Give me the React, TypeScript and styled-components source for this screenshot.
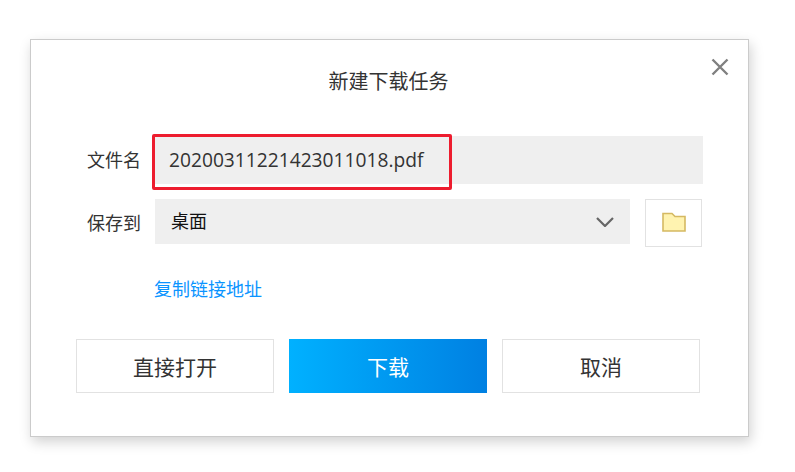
import React from "react";
import styled, { createGlobalStyle } from "styled-components";

const Global = createGlobalStyle`
  html, body { margin: 0; padding: 0; background: #fff; }
  body { font-family: "Open Sans", "Noto Sans CJK SC", sans-serif; color: #333; }
`;

const Stage = styled.div`
  width: 795px;
  height: 472px;
  padding: 39px 0 0 30px;
  box-sizing: border-box;
  overflow: hidden;
`;

const Dialog = styled.div`
  position: relative;
  width: 719px;
  height: 398px;
  box-sizing: border-box;
  background: #fff;
  border: 1px solid #cbcbcb;
  box-shadow: 2px 5px 12px rgba(0, 0, 0, 0.18);
  display: flex;
  flex-direction: column;
`;

const Title = styled.h1`
  margin: 28px 0 0;
  padding-right: 2px;
  height: 28px;
  font-size: 20px;
  line-height: 28px;
  font-weight: 400;
  text-align: center;
  color: #333;
`;

const Close = styled.button`
  position: absolute;
  top: 17px;
  right: 18px;
  width: 20px;
  height: 20px;
  padding: 0;
  border: 0;
  background: none;
  display: block;
`;

const Form = styled.div`
  margin-top: 40px;
  display: flex;
  flex-direction: column;
`;

const Row = styled.div<{ $h: number; $top?: number }>`
  display: flex;
  align-items: flex-start;
  height: ${(p) => p.$h}px;
  margin-top: ${(p) => p.$top ?? 0}px;
  padding-left: 56px;
`;

const Label = styled.label<{ $h: number }>`
  width: 68px;
  height: ${(p) => p.$h}px;
  line-height: ${(p) => p.$h}px;
  font-size: 18px;
  color: #333;
  white-space: nowrap;
`;

const NameField = styled.div`
  position: relative;
  width: 548px;
  height: 48px;
  background: #efefef;
  padding-left: 14px;
  box-sizing: border-box;
  font-size: 19.2px;
  line-height: 48px;
  color: #333;
`;

const Highlight = styled.div`
  position: absolute;
  left: -3px;
  top: -2px;
  width: 300px;
  height: 56px;
  box-sizing: border-box;
  border: 3px solid #ed1c2e;
  border-radius: 2px;
`;

const Select = styled.div`
  width: 475px;
  height: 45px;
  background: #efefef;
  padding: 0 16px;
  box-sizing: border-box;
  display: flex;
  align-items: center;
  justify-content: space-between;
  font-size: 18px;
  line-height: 45px;
  color: #111;
`;

const FolderButton = styled.button`
  width: 57px;
  height: 48px;
  margin-left: 15px;
  padding: 0 0 2px;
  background: #fff;
  border: 1px solid #e2e2e2;
  display: flex;
  align-items: center;
  justify-content: center;
`;

const LinkRow = styled.div`
  margin: 28px 0 0 123px;
  height: 28px;
`;

const CopyLink = styled.a`
  font-size: 18px;
  line-height: 28px;
  color: #0a94ff;
  display: block;
`;

const Actions = styled.div`
  margin: 36px 0 0 45px;
  display: flex;
  gap: 15px;
`;

const Button = styled.button<{ $primary?: boolean }>`
  width: 198px;
  height: 54px;
  padding: 0;
  box-sizing: border-box;
  font-family: inherit;
  font-size: 21px;
  color: ${(p) => (p.$primary ? "#fff" : "#333")};
  background: ${(p) => (p.$primary ? "linear-gradient(90deg, #00b1ff, #0080e2)" : "#fff")};
  border: ${(p) => (p.$primary ? "0" : "1px solid #e2e2e2")};
`;

export default function App() {
  return (
    <Stage>
      <Global />
      <Dialog>
        <Title>新建下载任务</Title>
        <Close aria-label="关闭">
          <svg width="20" height="20" viewBox="0 0 20 20">
            <path d="M2.5 2.5 L17.5 17.5 M17.5 2.5 L2.5 17.5" stroke="#808080" strokeWidth="2.4" fill="none" />
          </svg>
        </Close>
        <Form>
          <Row $h={48}>
            <Label $h={48}>文件名</Label>
            <NameField>
              20200311221423011018.pdf
              <Highlight />
            </NameField>
          </Row>
          <Row $h={48} $top={15}>
            <Label $h={48}>保存到</Label>
            <Select>
              <span>桌面</span>
              <svg width="18" height="10" viewBox="0 0 18 10">
                <path d="M1 1 L9 9 L17 1" stroke="#666" strokeWidth="2.2" fill="none" />
              </svg>
            </Select>
            <FolderButton aria-label="选择文件夹">
              <svg width="24" height="20" viewBox="0 0 24 20">
                <path d="M1 1.5 H10 L13 4.5 H23 V19 H1 Z" fill="#fff3b0" stroke="#d5b962" strokeWidth="1.6" />
              </svg>
            </FolderButton>
          </Row>
        </Form>
        <LinkRow>
          <CopyLink>复制链接地址</CopyLink>
        </LinkRow>
        <Actions>
          <Button>直接打开</Button>
          <Button $primary>下载</Button>
          <Button>取消</Button>
        </Actions>
      </Dialog>
    </Stage>
  );
}
